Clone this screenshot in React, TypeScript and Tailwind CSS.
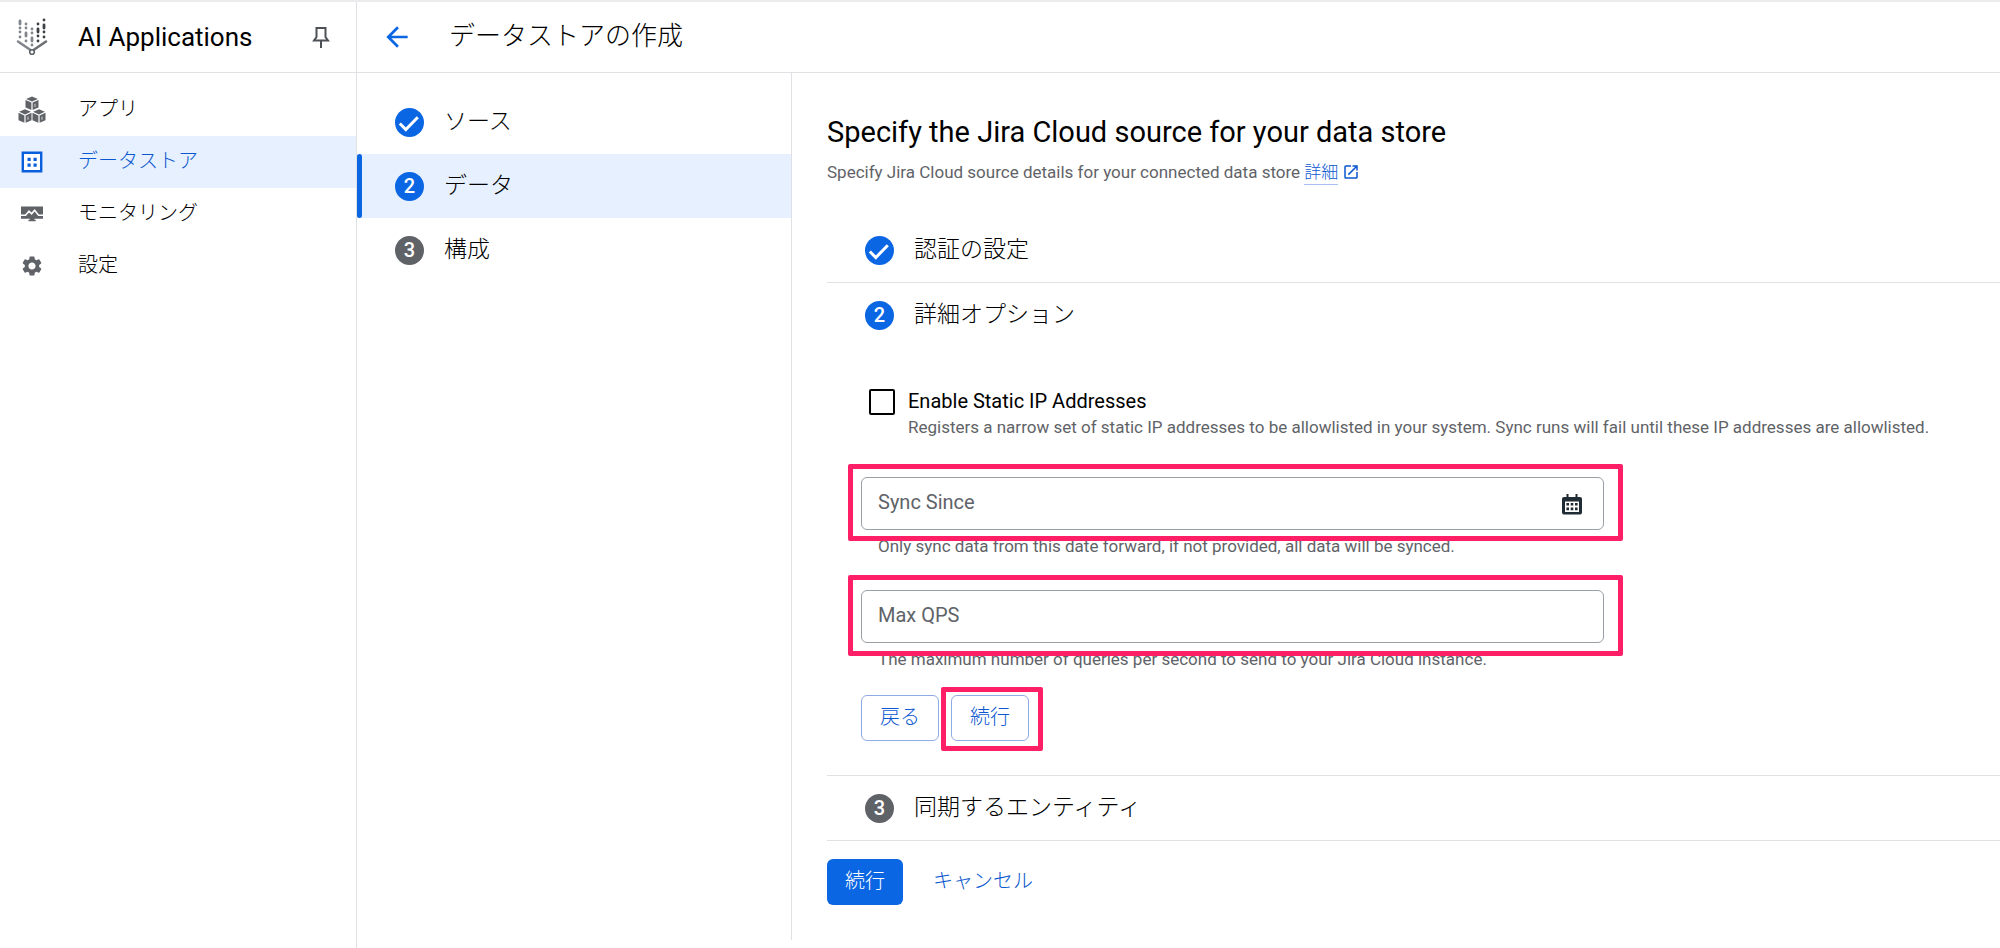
import { useState } from "react";
import type { ReactNode } from "react";
import { MdArrowBack, MdOpenInNew, MdSettings } from "react-icons/md";

type StepState = "done" | "active" | "pending";

interface Step {
  number: number;
  label: string;
  state: StepState;
}

const steps: Step[] = [
  { number: 1, label: "ソース", state: "done" },
  { number: 2, label: "データ", state: "active" },
  { number: 3, label: "構成", state: "pending" },
];

function LogoIcon() {
  // x, y and length of every dash in the logo; a length of 0 is a dot
  const grey = [
    [4, 3, 3], [4, 10, 0], [4, 14, 0], [4, 19, 0],
    [10, 6, 0], [10, 10, 0], [10, 15, 3], [10, 23, 0],
    [16, 11, 0], [16, 15, 0], [16, 20, 3], [16, 27, 0],
  ];
  const dark = [
    [22, 6, 0], [22, 11, 3], [22, 18, 0], [22, 23, 0],
    [28, 2, 0], [28, 7, 3], [28, 14, 0], [28, 19, 0],
  ];
  return (
    <svg viewBox="0 0 32 38" className="h-[38px] w-8" fill="none" strokeLinecap="round">
      <g stroke="#80868b" strokeWidth="2.8">
        {grey.map(([x, y, len]) => (
          <path key={`${x}-${y}`} d={`M${x} ${y}v${len || 0.01}`} />
        ))}
      </g>
      <g stroke="#3c4043" strokeWidth="2.8">
        {dark.map(([x, y, len]) => (
          <path key={`${x}-${y}`} d={`M${x} ${y}v${len || 0.01}`} />
        ))}
      </g>
      <path d="M2 23.5l12.5 8.500" stroke="#80868b" strokeWidth="2.6" />
      <path d="M30 23.5L17.5 32" stroke="#6b7075" strokeWidth="2.6" />
      <circle cx="16" cy="34" r="2.3" stroke="#5f6368" strokeWidth="1.6" fill="#fff" />
    </svg>
  );
}

function PinIcon() {
  return (
    <svg viewBox="0 0 18 24" className="h-6 w-[18px]" fill="none" stroke="#4d5156" strokeWidth="2">
      <path d="M4.500 3h9v9l2.500 3.600H2L4.500 12zM9 15.600V23" />
    </svg>
  );
}

function CheckIcon() {
  return (
    <svg viewBox="0 0 29 29" className="size-[29px]" fill="none" stroke="#fff" strokeWidth="3">
      <path d="M4.800 15.500l6 6L22.800 9.300" />
    </svg>
  );
}

function Cube({ x, y }: { x: number; y: number }) {
  return (
    <g transform={`translate(${x} ${y})`}>
      <path d="M0-6.900L5.900-4.400 0-1.800-5.900-4.400z" />
      <path d="M-6.500-3.500L-.6-.8v7.400L-6.500 4z" />
      <path d="M6.500-3.500L.6-.8v7.400L6.500 4z" />
      <path d="M3 .4v3.200" stroke="#fff" strokeWidth=".7" />
    </g>
  );
}

function AppsIcon() {
  return (
    <svg viewBox="0 0 28 28" className="size-7" fill="#5f6368">
      <Cube x={14} y={7.4} />
      <Cube x={7} y={20.2} />
      <Cube x={21} y={20.2} />
    </svg>
  );
}

function DataStoreIcon() {
  return (
    <svg viewBox="0 0 22 22" className="size-[22px]" fill="#0b5fdb">
      <path d="M1.8 1.8h18.4v18.4H1.8z" fill="#fff" stroke="#0b5fdb" strokeWidth="2.4" />
      <path d="M6.500 6.800h3.200v3.200H6.500zM12.500 6.800h3.200v3.200h-3.200zM6.500 12.600h3.200v3.200H6.500zM12.500 12.600h3.200v3.200h-3.200z" />
    </svg>
  );
}

function MonitoringIcon() {
  return (
    <svg viewBox="0 0 22 16" className="h-4 w-[22px]">
      <path d="M0 .5h22v12.300h-8.600v1h1.300v1.400H7.500v-1.400h1.300v-1H0z" fill="#5f6368" />
      <path d="M0 9.200h4.600l3.400-4 2.600 2.600 3-3.600 4 5H22" fill="none" stroke="#fff" strokeWidth="1.5" />
    </svg>
  );
}

function CalendarIcon() {
  return (
    <svg viewBox="0 0 20 21" className="h-[21px] w-5">
      <path d="M4.500 0h2v3h7V0h2v3H18q2 0 2 2v13.500q0 2-2 2H2q-2 0-2-2V5q0-2 2-2h2.500z" fill="#202b33" />
      <path d="M3 7.500h14v10.500H3z" fill="#fff" />
      <path d="M4.400 9h2.600v2.600H4.400zM8.700 9h2.600v2.600H8.700zM13 9h2.600v2.600H13zM4.400 13.600h2.600v2.600H4.400zM8.700 13.600h2.600v2.600H8.700zM13 13.600h2.600v2.600H13z" fill="#202b33" />
    </svg>
  );
}

const navItems = [
  { label: "アプリ", icon: <AppsIcon />, active: false },
  { label: "データストア", icon: <DataStoreIcon />, active: true },
  { label: "モニタリング", icon: <MonitoringIcon />, active: false },
  { label: "設定", icon: <MdSettings className="size-6 text-[#5f6368]" />, active: false },
];

function StepBadge({ number, state }: { number: number; state: StepState }) {
  return (
    <span
      className={`flex size-[29px] shrink-0 items-center justify-center rounded-full text-xl font-medium text-white ${state === "pending" ? "bg-[#5f6368]" : "bg-[#0b66e4]"}`}
    >
      {state === "done" ? <CheckIcon /> : number}
    </span>
  );
}

function SectionHeader({ number, state, children }: { number: number; state: StepState; children: ReactNode }) {
  return (
    <h2 className="flex h-16 items-center gap-5 pl-[38px] text-[23px] font-light">
      <StepBadge number={number} state={state} />
      <span>{children}</span>
    </h2>
  );
}

// Pink frame that marks the control it is laid over.
function Highlight({ className }: { className: string }) {
  return <span className={`pointer-events-none absolute z-10 rounded-xs border-5 border-[#ff1f66] ${className}`} />;
}

interface TextFieldProps {
  id: string;
  label: string;
  hint: string;
  trailing?: ReactNode;
  highlight: string;
}

function TextField({ id, label, hint, trailing, highlight }: TextFieldProps) {
  const [value, setValue] = useState("");
  return (
    <div className="max-w-[743px]">
      <div className="relative flex h-[53px] items-center rounded-md border border-[#9aa0a6]">
        <input
          id={id}
          value={value}
          onChange={(event) => setValue(event.target.value)}
          aria-describedby={`${id}-hint`}
          className="h-full min-w-0 flex-1 bg-transparent px-4 text-xl outline-none"
        />
        {value === "" && (
          <label htmlFor={id} className="pointer-events-none absolute left-4 pb-1 text-xl text-[#5f6368]">
            {label}
          </label>
        )}
        {trailing}
        <Highlight className={highlight} />
      </div>
      <p id={`${id}-hint`} className="pt-1 pl-[17px] text-[17px] leading-6 text-[#5f6368]">
        {hint}
      </p>
    </div>
  );
}

function Sidebar() {
  return (
    <aside className="w-[357px] shrink-0 border-r border-[#dfe1e5]">
      <div className="flex h-[71px] items-center border-b border-[#dfe1e5] pr-[26px] pl-4">
        <LogoIcon />
        <span className="flex-1 pl-[30px] text-[26px]">AI Applications</span>
        <button aria-label="AI Applications">
          <PinIcon />
        </button>
      </div>
      <nav className="pt-[11px]">
        {navItems.map((item) => (
          <a
            key={item.label}
            href="#"
            className={`flex h-[52px] items-center text-xl font-light ${item.active ? "bg-[#e6f0ff] text-[#0b57d0]" : "text-black"}`}
          >
            <span className="flex w-[63px] justify-center">{item.icon}</span>
            <span className="pb-0.5 pl-[15px]">{item.label}</span>
          </a>
        ))}
      </nav>
    </aside>
  );
}

export default function App() {
  const [staticIp, setStaticIp] = useState(false);

  return (
    <div className="flex min-h-screen border-t-2 border-[#ececee] bg-white font-['Roboto','Noto_Sans_CJK_JP',sans-serif] text-black">
      <Sidebar />

      <div className="flex min-w-0 flex-1 flex-col pb-2">
        <header className="flex h-[71px] shrink-0 items-center gap-9 border-b border-[#dfe1e5] pl-6">
          <button aria-label="戻る" className="text-[#0b66e4]">
            <MdArrowBack className="size-8" />
          </button>
          <h1 className="pb-0.5 text-[26px] font-light">データストアの作成</h1>
        </header>

        <div className="flex flex-1">
          <ol className="w-[435px] shrink-0 border-r border-[#dfe1e5] pt-[17px]">
            {steps.map((step) => (
              <li
                key={step.number}
                className={`relative flex h-16 items-center gap-5 pl-[38px] text-[23px] font-light ${step.state === "active" ? "bg-[#e6f0ff]" : ""}`}
              >
                {step.state === "active" && <span className="absolute inset-y-0 left-0 w-[5px] rounded-sm bg-[#0b66e4]" />}
                <StepBadge number={step.number} state={step.state} />
                <span>{step.label}</span>
              </li>
            ))}
          </ol>

          <main className="min-w-0 flex-1 pt-[41px] pl-[35px]">
            <h2 className="text-[29px] leading-9">Specify the Jira Cloud source for your data store</h2>
            <p className="mt-2 flex items-center gap-1 text-[17px] leading-7 text-[#5f6368]">
              Specify Jira Cloud source details for your connected data store
              <a href="#" className="flex items-center gap-1 text-[#0b57d0]">
                <span className="border-b border-[#a8c0f0] leading-6 font-light">詳細</span>
                <MdOpenInNew className="size-[18px]" />
              </a>
            </p>

            <section className="mt-8 border-b border-[#dfe1e5]">
              <SectionHeader number={1} state="done">認証の設定</SectionHeader>
            </section>

            <section className="border-b border-[#dfe1e5] pb-[34px]">
              <SectionHeader number={2} state="active">詳細オプション</SectionHeader>

              <div className="pt-10 pl-[34px]">
                <div className="flex items-start gap-[13px] pl-2">
                  <input
                    id="static-ip"
                    type="checkbox"
                    checked={staticIp}
                    onChange={(event) => setStaticIp(event.target.checked)}
                    className="mt-0.5 size-[26px] shrink-0 appearance-none rounded-xs border-2 border-black checked:bg-[#0b66e4]"
                  />
                  <div>
                    <label htmlFor="static-ip" className="block text-xl leading-7">
                      Enable Static IP Addresses
                    </label>
                    <p className="text-[17px] leading-6 text-[#5f6368]">
                      Registers a narrow set of static IP addresses to be allowlisted in your system. Sync runs will fail until these IP addresses are allowlisted.
                    </p>
                  </div>
                </div>

                <div className="flex flex-col gap-8 pt-[38px]">
                  <TextField
                    id="sync-since"
                    label="Sync Since"
                    hint="Only sync data from this date forward, if not provided, all data will be synced."
                    highlight="-top-3.5 -right-5 -bottom-3 -left-3.5"
                    trailing={
                      <button aria-label="Sync Since" className="pt-0.5 pr-[21px]">
                        <CalendarIcon />
                      </button>
                    }
                  />
                  <TextField
                    id="max-qps"
                    label="Max QPS"
                    hint="The maximum number of queries per second to send to your Jira Cloud instance."
                    highlight="-top-4 -right-5 -bottom-3.5 -left-3.5"
                  />
                </div>

                <div className="flex gap-3 pt-6">
                  <button className="h-[46px] rounded-md border border-[#8fabe6] px-[18px] pb-0.5 text-xl font-light text-[#0b57d0]">戻る</button>
                  <div className="relative">
                    <button className="h-[46px] rounded-md border border-[#8fabe6] px-[18px] pb-0.5 text-xl font-light text-[#0b57d0]">続行</button>
                    <Highlight className="-top-2 -right-3.5 -bottom-2.5 -left-2.5" />
                  </div>
                </div>
              </div>
            </section>

            <section className="border-b border-[#dfe1e5]">
              <SectionHeader number={3} state="pending">同期するエンティティ</SectionHeader>
            </section>

            <div className="flex gap-3 pt-[18px]">
              <button className="h-[46px] rounded-md bg-[#0b66e4] px-[18px] pb-0.5 text-xl font-light text-white">続行</button>
              <button className="h-[46px] px-[18px] pb-0.5 text-xl font-light text-[#0b57d0]">キャンセル</button>
            </div>
          </main>
        </div>
      </div>
    </div>
  );
}
